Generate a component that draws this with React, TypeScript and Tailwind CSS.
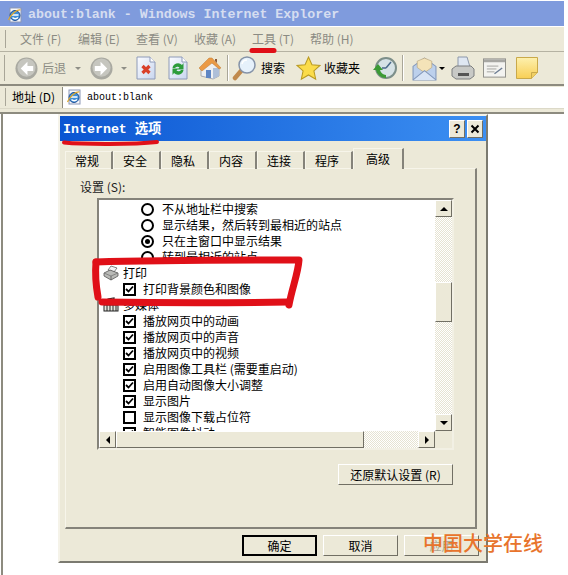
const cjk = "font-['Noto_Sans_CJK_SC','Liberation_Sans',sans-serif]"
const mono = "font-['Liberation_Mono','DejaVu_Sans_Mono',monospace]"

const menus = ['文件 (F)', '编辑 (E)', '查看 (V)', '收藏 (A)', '工具 (T)', '帮助 (H)']
const tabs = ['常规', '安全', '隐私', '内容', '连接', '程序']

type Row = { kind: 'radio' | 'check' | 'group'; label: string; on?: boolean; icon?: 'printer' | 'media' }

const rows: Row[] = [
  { kind: 'radio', label: '不从地址栏中搜索' },
  { kind: 'radio', label: '显示结果，然后转到最相近的站点' },
  { kind: 'radio', label: '只在主窗口中显示结果', on: true },
  { kind: 'radio', label: '转到最相近的站点' },
  { kind: 'group', label: '打印', icon: 'printer' },
  { kind: 'check', label: '打印背景颜色和图像', on: true },
  { kind: 'group', label: '多媒体', icon: 'media' },
  { kind: 'check', label: '播放网页中的动画', on: true },
  { kind: 'check', label: '播放网页中的声音', on: true },
  { kind: 'check', label: '播放网页中的视频', on: true },
  { kind: 'check', label: '启用图像工具栏 (需要重启动)', on: true },
  { kind: 'check', label: '启用自动图像大小调整', on: true },
  { kind: 'check', label: '显示图片', on: true },
  { kind: 'check', label: '显示图像下载占位符' },
  { kind: 'check', label: '智能图像抖动', on: true },
]

function IeIcon({ className }: { className?: string }) {
  return (
    <svg viewBox="0 0 16 16" className={className}>
      <rect x="3" y="1" width="11" height="14" fill="#f7f8fc" stroke="#8b97b5" />
      <circle cx="8" cy="8.5" r="5" fill="#3f8fd8" stroke="#1c4f96" />
      <path d="M5 8h6.5M5.5 10.5c1.500 1.500 4 1.500 5.500 0" stroke="#fff" strokeWidth="1.500" fill="none" />
      <path d="M1.500 13c2-5 8-11 12-10" stroke="#e0a92e" strokeWidth="1.200" fill="none" />
    </svg>
  )
}

function NavCircle({ dir }: { dir: 'left' | 'right' }) {
  return (
    <svg viewBox="0 0 24 24" className="w-[23px] h-[23px] shrink-0">
      <circle cx="12" cy="12" r="11.500" fill="#a9a9a1" />
      <circle cx="12" cy="11" r="9.500" fill="#c6c6bf" />
      {dir === 'left' ? (
        <path d="M13 5l-7 7 7 7v-4.500h6v-5h-6z" fill="#fff" />
      ) : (
        <path d="M11 5l7 7-7 7v-4.500H5v-5h6z" fill="#fff" />
      )}
    </svg>
  )
}

function Caret({ dark }: { dark?: boolean }) {
  return <span className={`block w-0 h-0 border-x-[3px] border-x-transparent border-t-[3px] ${dark ? 'border-t-black' : 'border-t-[#8e8e86]'}`} />
}

function ToolIcons() {
  return (
    <div className="flex items-center h-[32px]">
      <div className="w-[3px] h-[26px] ml-[4px] border-l border-[#a9a698]" />
      <div className="ml-[8px]"><NavCircle dir="left" /></div>
      <span className="ml-[4px] text-[12px] text-[#8b8b83]">后退</span>
      <span className="ml-[9px]"><Caret /></span>
      <div className="ml-[9px]"><NavCircle dir="right" /></div>
      <span className="ml-[8px]"><Caret /></span>
      <svg viewBox="0 0 20 24" className="ml-[9px] w-[20px] h-[24px]">
        <defs>
          <linearGradient id="docFill" x1="0" y1="0" x2="1" y2="1">
            <stop offset="0" stopColor="#fbfcff" />
            <stop offset="1" stopColor="#c9d6ef" />
          </linearGradient>
        </defs>
        <path d="M1 1h13l5 5v17H1z" fill="url(#docFill)" stroke="#8e9ab8" />
        <path d="M14 1v5h5" fill="#fff" stroke="#8e9ab8" />
        <path d="M6.500 10l7 7M13.500 10l-7 7" stroke="#d9402a" strokeWidth="3.200" />
      </svg>
      <svg viewBox="0 0 20 24" className="ml-[12px] w-[20px] h-[24px]">
        <path d="M1 1h13l5 5v17H1z" fill="url(#docFill)" stroke="#8e9ab8" />
        <path d="M14 1v5h5" fill="#fff" stroke="#8e9ab8" />
        <path d="M4.500 12a5.500 5.500 0 0 1 9.500-3l1.500-2v6.500h-6l2-2a3 3 0 0 0-4.500.5zM15.500 14a5.500 5.500 0 0 1-9.500 3l-1.500 2v-6.500h6l-2 2a3 3 0 0 0 4.500-.5z" fill="#2c9c3a" />
      </svg>
      <svg viewBox="0 0 24 24" className="ml-[10px] w-[24px] h-[24px]">
        <path d="M3 12l9-7 9 7v8l-6 3-12-3z" fill="#eef0f2" stroke="#a8aab0" />
        <path d="M15 23V12l6 0v8z" fill="#aebfd8" />
        <path d="M1 12L11 2l3 0 9 10-2 1-7-6-10 8z" fill="#eb9a45" stroke="#bd7a34" strokeWidth=".5" />
        <path d="M17 3h2v4l-2-2z" fill="#8c5a38" />
        <rect x="8" y="14" width="5" height="8" fill="#5f86c4" />
      </svg>
      <div className="ml-[5px] w-[2px] h-[26px] border-l border-[#a9a698] border-r border-r-white" />
      <svg viewBox="0 0 25 26" className="ml-[3px] w-[25px] h-[26px]">
        <path d="M9 16l-6 7" stroke="#c08a4d" strokeWidth="4.500" strokeLinecap="round" />
        <circle cx="15" cy="10" r="8" fill="#e6f1fb" stroke="#8593a8" strokeWidth="1.500" />
        <path d="M10 9a5 5 0 0 1 5-4" stroke="#fff" strokeWidth="1.500" fill="none" />
      </svg>
      <span className="ml-[4px] text-[12px] text-black">搜索</span>
      <svg viewBox="0 0 24 24" className="ml-[11px] w-[25px] h-[25px]">
        <path d="M12 1l3.300 7.300 7.700.8-5.800 5.200 1.700 8L12 18.200 5.100 22.300l1.700-8L1 9.100l7.700-.8z" fill="#fbdc4a" stroke="#b99a22" />
      </svg>
      <span className="ml-[3px] text-[12px] text-black">收藏夹</span>
      <svg viewBox="0 0 24 24" className="ml-[13px] w-[24px] h-[24px]">
        <circle cx="13" cy="12" r="10" fill="#d6e2e6" stroke="#7d8f8a" strokeWidth="2" />
        <path d="M13 12l5-6M13 12H9" stroke="#4a6a8a" strokeWidth="1.500" />
        <path d="M13 22a10 10 0 0 1-10-8l-3 0 5-6 5 6-3 0a7 7 0 0 0 6 5z" fill="#3c9a35" />
      </svg>
      <div className="ml-[5px] w-[2px] h-[26px] border-l border-[#a9a698] border-r border-r-white" />
      <svg viewBox="0 0 24 24" className="ml-[8px] w-[25px] h-[25px]">
        <path d="M1 10l11-8 11 8v13H1z" fill="#bcd0ec" stroke="#8197bb" />
        <path d="M5 11V5l7-3 7 3v6l-7 5z" fill="#f4e3b8" stroke="#b5a27a" strokeWidth=".6" />
        <path d="M1 23l11-9 11 9" fill="#d8e4f5" stroke="#8197bb" />
      </svg>
      <span className="ml-[2px]"><Caret dark /></span>
      <svg viewBox="0 0 24 24" className="ml-[6px] w-[24px] h-[24px]">
        <path d="M7 1h9l3 10H7z" fill="#dfe7f2" stroke="#8d98aa" />
        <path d="M1 13l4-3h15l3 3v7l-4 3H5l-4-3z" fill="#c8c9c6" stroke="#7d7f80" />
        <rect x="7" y="17" width="11" height="3" fill="#555" />
      </svg>
      <svg viewBox="0 0 24 20" className="ml-[8px] w-[23px] h-[20px]">
        <rect x=".5" y=".5" width="23" height="19" fill="#f3f3f0" stroke="#8f8f8a" />
        <rect x="1" y="1" width="22" height="3" fill="#a6a6a2" />
        <path d="M4 8h12M4 11h10M4 14h8" stroke="#a3a3a0" />
        <path d="M12 16l8-6" stroke="#6d7d93" strokeWidth="1.500" />
      </svg>
      <svg viewBox="0 0 22 22" className="ml-[10px] w-[22px] h-[22px]">
        <defs>
          <linearGradient id="noteFill" x1="0" y1="0" x2="0" y2="1">
            <stop offset="0" stopColor="#fdf0ae" />
            <stop offset="1" stopColor="#f8cf55" />
          </linearGradient>
        </defs>
        <path d="M.5.500h21v15l-6 6H.5z" fill="url(#noteFill)" stroke="#c9a94a" />
        <path d="M21.500 15.500h-6v6" fill="#f0cf65" stroke="#c9a94a" />
      </svg>
    </div>
  )
}

function RowIcon({ row }: { row: Row }) {
  if (row.kind === 'radio') {
    return (
      <span className="w-[13px] h-[13px] rounded-full border-[2px] border-black bg-white flex items-center justify-center shrink-0">
        {row.on && <span className="w-[5px] h-[5px] rounded-full bg-black" />}
      </span>
    )
  }
  if (row.kind === 'check') {
    return (
      <span className="w-[13px] h-[13px] border-[2px] border-black bg-white shrink-0">
        {row.on && (
          <svg viewBox="0 0 9 9" className="w-[9px] h-[9px] block">
            <path d="M1 4l2.500 2.500L8 1.500" stroke="#000" strokeWidth="1.800" fill="none" />
          </svg>
        )}
      </span>
    )
  }
  if (row.icon === 'printer') {
    return (
      <svg viewBox="0 0 16 16" className="w-[16px] h-[16px] shrink-0">
        <path d="M8 1l6 2-3 4-6-2z" fill="#f4f5f7" stroke="#666" strokeWidth=".8" />
        <path d="M1 8l6-3 8 3v3l-7 4-7-4z" fill="#b9bab7" stroke="#555" strokeWidth=".8" />
        <path d="M1 8l7 3 7-3" fill="none" stroke="#777" strokeWidth=".8" />
        <path d="M8 11v4" stroke="#555" strokeWidth=".8" />
      </svg>
    )
  }
  return (
    <svg viewBox="0 0 16 16" className="w-[16px] h-[16px] shrink-0">
      <path d="M5 7V2l6-1v6" stroke="#222" strokeWidth="1.200" fill="none" />
      <rect x="1" y="8" width="14" height="6" fill="#e8e8e0" stroke="#222" />
      <path d="M4 8v6M7 8v6M10 8v6M13 8v6" stroke="#222" />
    </svg>
  )
}

function ListRow({ row }: { row: Row }) {
  const indent = row.kind === 'radio' ? 'pl-[42px]' : row.kind === 'check' ? 'pl-[24px]' : 'pl-[4px]'
  const gap = row.kind === 'group' ? 'gap-[4px]' : row.kind === 'radio' ? 'gap-[8px]' : 'gap-[7px]'
  return (
    <div className={`h-[16px] flex items-center whitespace-nowrap ${indent} ${gap}`}>
      <RowIcon row={row} />
      <span className="text-[12px] leading-[16px] text-black">{row.label}</span>
    </div>
  )
}

function ScrollBtn({ dir, className }: { dir: 'up' | 'down' | 'left' | 'right'; className?: string }) {
  const arrow = {
    up: 'border-x-[4px] border-x-transparent border-b-[4px] border-b-black',
    down: 'border-x-[4px] border-x-transparent border-t-[4px] border-t-black',
    left: 'border-y-[4px] border-y-transparent border-r-[4px] border-r-black',
    right: 'border-y-[4px] border-y-transparent border-l-[4px] border-l-black',
  }[dir]
  return (
    <div className={`w-[17px] h-[17px] shrink-0 bg-[#ece9d8] border border-white border-r-[#716f64] border-b-[#716f64] flex items-center justify-center ${className ?? ''}`}>
      <span className={`w-0 h-0 ${arrow}`} />
    </div>
  )
}

const track = 'bg-[repeating-conic-gradient(#e6e3d2_0_25%,#ffffff_0_50%)] bg-[length:2px_2px]'

function SettingsList() {
  return (
    <div className="w-[357px] h-[252px] ml-[31px] mt-[3px] border-2 border-[#85837a] border-r-[#f2f0e4] border-b-[#f2f0e4] bg-white flex flex-col">
      <div className="flex flex-1 min-h-0">
        <div className="flex-1 min-w-0 overflow-hidden pt-[1px]">
          {rows.map((row) => (
            <ListRow key={row.label} row={row} />
          ))}
        </div>
        <div className="w-[17px] flex flex-col">
          <ScrollBtn dir="up" />
          <div className={`flex-1 flex flex-col ${track}`}>
            <div className="h-[65px]" />
            <div className="h-[40px] bg-[#ece9d8] border border-white border-r-[#716f64] border-b-[#716f64]" />
          </div>
          <ScrollBtn dir="down" />
        </div>
      </div>
      <div className="flex h-[17px]">
        <ScrollBtn dir="left" />
        <div className="w-[248px] bg-[#ece9d8] border border-white border-r-[#716f64] border-b-[#716f64]" />
        <div className={`flex-1 ${track}`} />
        <ScrollBtn dir="right" />
        <div className="w-[17px] bg-[#ece9d8]" />
      </div>
    </div>
  )
}

function DlgButton({ children, primary, disabled }: { children: React.ReactNode; primary?: boolean; disabled?: boolean }) {
  return (
    <button
      className={`w-[75px] h-[21px] bg-[#ece9d8] text-[12px] leading-none ${
        primary ? 'border-2 border-black' : 'border border-white border-r-[#716f64] border-b-[#716f64]'
      } ${disabled ? 'text-[#a9a796]' : 'text-black'}`}
    >
      {children}
    </button>
  )
}

function Dialog() {
  return (
    <div className="ml-[55px] w-[430px] h-[449px] bg-[#ece9d8] border-2 border-[#f5f3e9] border-r-[#7b7a70] border-b-[#7b7a70] flex flex-col">
      <div className="h-[25px] shrink-0 bg-gradient-to-r from-[#0a55d2] to-[#3c8ff2] flex items-center pl-[3px] pr-[3px]">
        <span className={`text-[13.300px] font-bold text-white ${mono}`}>
          Internet <span className={`${cjk}`}>选项</span>
        </span>
        <div className="ml-auto flex gap-[2px]">
          <div className="w-[16px] h-[18px] bg-[#ece9d8] border border-white border-r-[#716f64] border-b-[#716f64] flex items-center justify-center text-[12px] font-bold font-['Liberation_Sans',sans-serif] text-black">?</div>
          <div className="w-[16px] h-[18px] bg-[#ece9d8] border border-white border-r-[#716f64] border-b-[#716f64] flex items-center justify-center">
            <svg viewBox="0 0 10 10" className="w-[10px] h-[10px]">
              <path d="M1.500 1.500l7 7M8.500 1.500l-7 7" stroke="#000" strokeWidth="2" />
            </svg>
          </div>
        </div>
      </div>

      <div className="px-[5px] pt-[7px] flex-1 flex flex-col">
        <div className="flex items-end h-[20px] relative z-10">
          {tabs.map((t) => (
            <div key={t} className="w-[48px] h-[18px] mb-[-1px] flex items-center justify-center text-[12px] text-black border-l border-t border-[#f7f5ea] border-r-2 border-r-[#85837a] pr-[3px]">
              {t}
            </div>
          ))}
          <div className="w-[51px] h-[21px] mb-[-1px] flex items-center justify-center text-[12px] text-black bg-[#ece9d8] border-l border-t border-[#f7f5ea] border-r-2 border-r-[#85837a]">
            高级
          </div>
        </div>
        <div className="w-[412px] h-[361px] border border-[#f7f5ea] border-r-2 border-r-[#85837a] border-b-2 border-b-[#85837a] flex flex-col">
          <div className="ml-[14px] mt-[10px] h-[16px] leading-[16px] text-[12px] text-[#222]">设置 (S):</div>
          <SettingsList />
          <button className="w-[115px] h-[21px] ml-[272px] mt-[14px] bg-[#ece9d8] border border-white border-r-[#716f64] border-b-[#716f64] text-[12px] text-black leading-none">
            还原默认设置 (R)
          </button>
        </div>
        <div className="flex justify-end gap-[6px] mt-[6px] mr-[2px]">
          <DlgButton primary>确定</DlgButton>
          <DlgButton>取消</DlgButton>
          <DlgButton disabled>应用</DlgButton>
        </div>
      </div>
    </div>
  )
}

function Annotations() {
  return (
    <svg viewBox="0 0 568 575" className="absolute inset-0 w-[568px] h-[575px] pointer-events-none">
      <g fill="none" stroke="#e01018" strokeLinecap="round" strokeLinejoin="round">
        <path d="M252 50.500h22" strokeWidth="5" />
        <path d="M64 142.500c20 2 70 2 93-.5" strokeWidth="4" />
        <path d="M102 302c60 1 130 1 186 0" strokeWidth="7" />
        <path d="M96 262c60-2 140-2 203-2 -1 14-7 28-10 45" strokeWidth="7" />
        <path d="M96 262c-1 12 0 24 2 35" strokeWidth="7" />
      </g>
    </svg>
  )
}

export default function App() {
  return (
    <div className={`relative w-[568px] h-[575px] bg-white overflow-hidden ${cjk}`}>
      <div className="w-[564px] pt-[1px]">
        <div className="h-[25px] bg-[#7f9bdd] flex items-center pl-[7px] gap-[5px] pt-[2px]">
          <IeIcon className="w-[16px] h-[16px]" />
          <span className={`text-[13.300px] font-bold text-[#d5ddf0] whitespace-pre ${mono}`}>about:blank - Windows Internet Explorer</span>
        </div>
        <div className="h-[25px] mt-[1px] bg-[#ece9d8] border-b border-[#b5b2a2] flex items-center relative">
          <div className="w-[3px] h-[18px] ml-[5px] border-l border-[#a9a698]" />
          <div className="flex ml-[12px]">
            {menus.map((m) => (
              <span key={m} className="w-[58px] text-[12px] text-[#8b8b83] whitespace-nowrap">{m}</span>
            ))}
          </div>
        </div>
        <div className="bg-[#ece9d8] border-b-2 border-[#8d8b7f]">
          <ToolIcons />
        </div>
        <div className="h-[22px] bg-[#ece9d8] flex items-center">
          <div className="w-[3px] h-[18px] ml-[5px] border-l border-[#a9a698]" />
          <span className="ml-[4px] text-[12px] text-black whitespace-nowrap">地址 (D)</span>
          <div className="ml-[7px] flex-1 h-[21px] bg-white border-l border-[#8d8b7f] flex items-center pl-[3px] gap-[5px]">
            <IeIcon className="w-[16px] h-[16px]" />
            <span className={`text-[10px] text-black ${mono}`}>about:blank</span>
          </div>
        </div>
        <div className="h-[6px] bg-[#ece9d8] border-t border-[#dcd9c8] border-b-2 border-b-[#8d8b7f]" />
        <div className="ml-[1px] border-l-2 border-[#8d8b7f] pb-[12px]">
          <Dialog />
        </div>
      </div>
      <Annotations />
      <div className="absolute left-[423px] top-[529px] text-[20px] leading-[28px] font-medium text-[#e8742c] whitespace-nowrap">中国大学在线</div>
    </div>
  )
}
